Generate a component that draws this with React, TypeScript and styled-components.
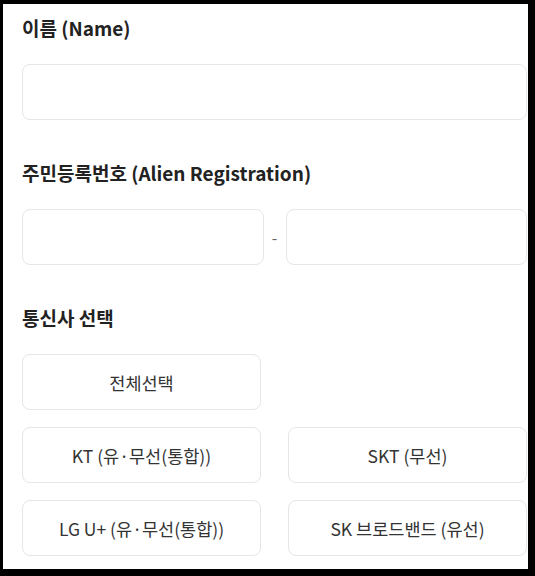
import styled, { createGlobalStyle } from 'styled-components';

const GlobalStyle = createGlobalStyle`
  * {
    box-sizing: border-box;
  }
  html, body {
    margin: 0;
    padding: 0;
    background: #000;
  }
  body {
    font-family: 'Noto Sans CJK KR', 'Noto Sans', sans-serif;
  }
`;

const Frame = styled.div`
  padding: 4px 7px 7px 3px;
  height: 576px;
`;
const Panel = styled.main`
  height: 100%;
  background: #fff;
  padding: 10px 1px 0 19px;
  display: flex;
  flex-direction: column;
  gap: 39px;
`;
const Section = styled.section`
  display: flex;
  flex-direction: column;
  gap: 22px;
`;
const Label = styled.div`
  font-size: 19px;
  line-height: 28px;
  font-weight: 700;
  color: #222;
`;
const TextInput = styled.input`
  display: block;
  width: 100%;
  height: 56px;
  border: 1px solid #e6e6e6;
  border-radius: 8px;
  background: #fff;
  padding: 0 14px;
  font: inherit;
  font-size: 16px;
  outline: none;
`;
const SplitRow = styled.div`
  display: flex;
  align-items: center;
`;
const Dash = styled.span`
  flex: 0 0 22px;
  text-align: center;
  font-size: 16px;
  color: #666;
`;
const ChoiceGrid = styled.div`
  display: grid;
  grid-template-columns: 239px 239px;
  column-gap: 27px;
  row-gap: 17px;
`;
const Choice = styled.button`
  height: 56px;
  border: 1px solid #e6e6e6;
  border-radius: 8px;
  background: #fff;
  font-family: inherit;
  font-size: 17.5px;
  color: #333;
  cursor: pointer;
`;

const carriers = ['KT (유·무선(통합))', 'SKT (무선)', 'LG U+ (유·무선(통합))', 'SK 브로드밴드 (유선)'];

const App = () => {
  return (
    <>
      <GlobalStyle />
      <Frame>
        <Panel>
          <Section>
            <Label>이름 (Name)</Label>
            <TextInput type='text' />
          </Section>
          <Section>
            <Label>주민등록번호 (Alien Registration)</Label>
            <SplitRow>
              <TextInput type='text' />
              <Dash>-</Dash>
              <TextInput type='password' />
            </SplitRow>
          </Section>
          <Section>
            <Label>통신사 선택</Label>
            <ChoiceGrid>
              <Choice>전체선택</Choice>
              <div />
              {carriers.map((c) => (
                <Choice key={c}>{c}</Choice>
              ))}
            </ChoiceGrid>
          </Section>
        </Panel>
      </Frame>
    </>
  );
};

export default App;
